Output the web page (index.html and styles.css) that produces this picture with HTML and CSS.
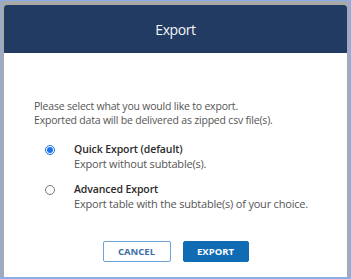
FILE: index.html
```html
<!doctype html>
<html>
<head>
  <meta charset="UTF-8" />
  <title>Export</title>
  <link rel="stylesheet" href="styles.css">
</head>
<body>
  <div class="frame">
    <div class="dialog">
      <div class="dialog-header">
        <h2>Export</h2>
      </div>
      <div class="dialog-body">
        <p class="intro">
          Please select what you would like to export.<br />
          Exported data will be delivered as zipped csv file(s).
        </p>
        <div class="options">
          <label class="option">
            <input type="radio" name="mode" value="quick" checked />
            <span class="option-text">
              <strong>Quick Export (default)</strong>
              <span>Export without subtable(s).</span>
            </span>
          </label>
          <label class="option">
            <input type="radio" name="mode" value="advanced" />
            <span class="option-text">
              <strong>Advanced Export</strong>
              <span>Export table with the subtable(s) of your choice.</span>
            </span>
          </label>
        </div>
        <div class="controls">
          <button class="btn btn-cancel">Cancel</button>
          <button class="btn btn-export">Export</button>
        </div>
      </div>
    </div>
  </div>
</body>
</html>
```

FILE: styles.css
```css
html, body {
  margin: 0;
  padding: 0;
  font-family: "Open Sans", "DejaVu Sans", sans-serif;
}
.frame {
  box-sizing: border-box;
  width: 351px;
  height: 279px;
  border: solid #8aaeea;
  border-width: 1px 2px 2px 1px;
  padding: 4px 2px 0 3px;
  background: #a9a9a9;
  display: flex;
}
.dialog {
  flex: 1;
  display: flex;
  flex-direction: column;
  background: #fff;
  border-radius: 3px 3px 0 0;
  overflow: hidden;
}
.dialog-header {
  height: 48px;
  background: #223b63;
  display: flex;
  align-items: center;
  justify-content: center;
}
.dialog-header h2 {
  margin: 0;
  color: #f4f6fa;
  font-size: 14px;
  font-weight: normal;
  letter-spacing: -0.4px;
}
.dialog-body {
  flex: 1;
  display: flex;
  flex-direction: column;
  padding: 47px 30px 15px 30px;
}
.intro {
  margin: 0 0 16px 0;
  font-size: 10.5px;
  line-height: 13.5px;
  letter-spacing: -0.2px;
  color: #555;
}
.options {
  display: flex;
  flex-direction: column;
  gap: 13px;
  padding-left: 11px;
}
.option {
  display: flex;
  align-items: flex-start;
  gap: 19px;
}
.option input {
  margin: 2px 0 0 0;
  width: 10px;
  height: 10px;
  flex: none;
  accent-color: #1a73e8;
}
.option-text {
  display: flex;
  flex-direction: column;
  font-size: 11px;
  line-height: 13.5px;
  letter-spacing: -0.2px;
  color: #555;
}
.option-text strong {
  font-size: 10.5px;
  color: #2b2b2b;
  font-weight: 600;
  letter-spacing: -0.1px;
}
.controls {
  margin-top: auto;
  display: flex;
  justify-content: center;
  gap: 12px;
}
.btn {
  box-sizing: border-box;
  height: 21px;
  padding: 0;
  font-family: inherit;
  font-size: 9.5px;
  font-weight: bold;
  text-transform: uppercase;
  border-radius: 2px;
  cursor: pointer;
}
.btn-cancel {
  width: 68px;
  background: #fff;
  color: #3b6ea6;
  border: 1px solid #6fa3d8;
}
.btn-export {
  width: 66px;
  background: #0f6cb4;
  color: #fff;
  border: 1px solid #0f6cb4;
}
```
